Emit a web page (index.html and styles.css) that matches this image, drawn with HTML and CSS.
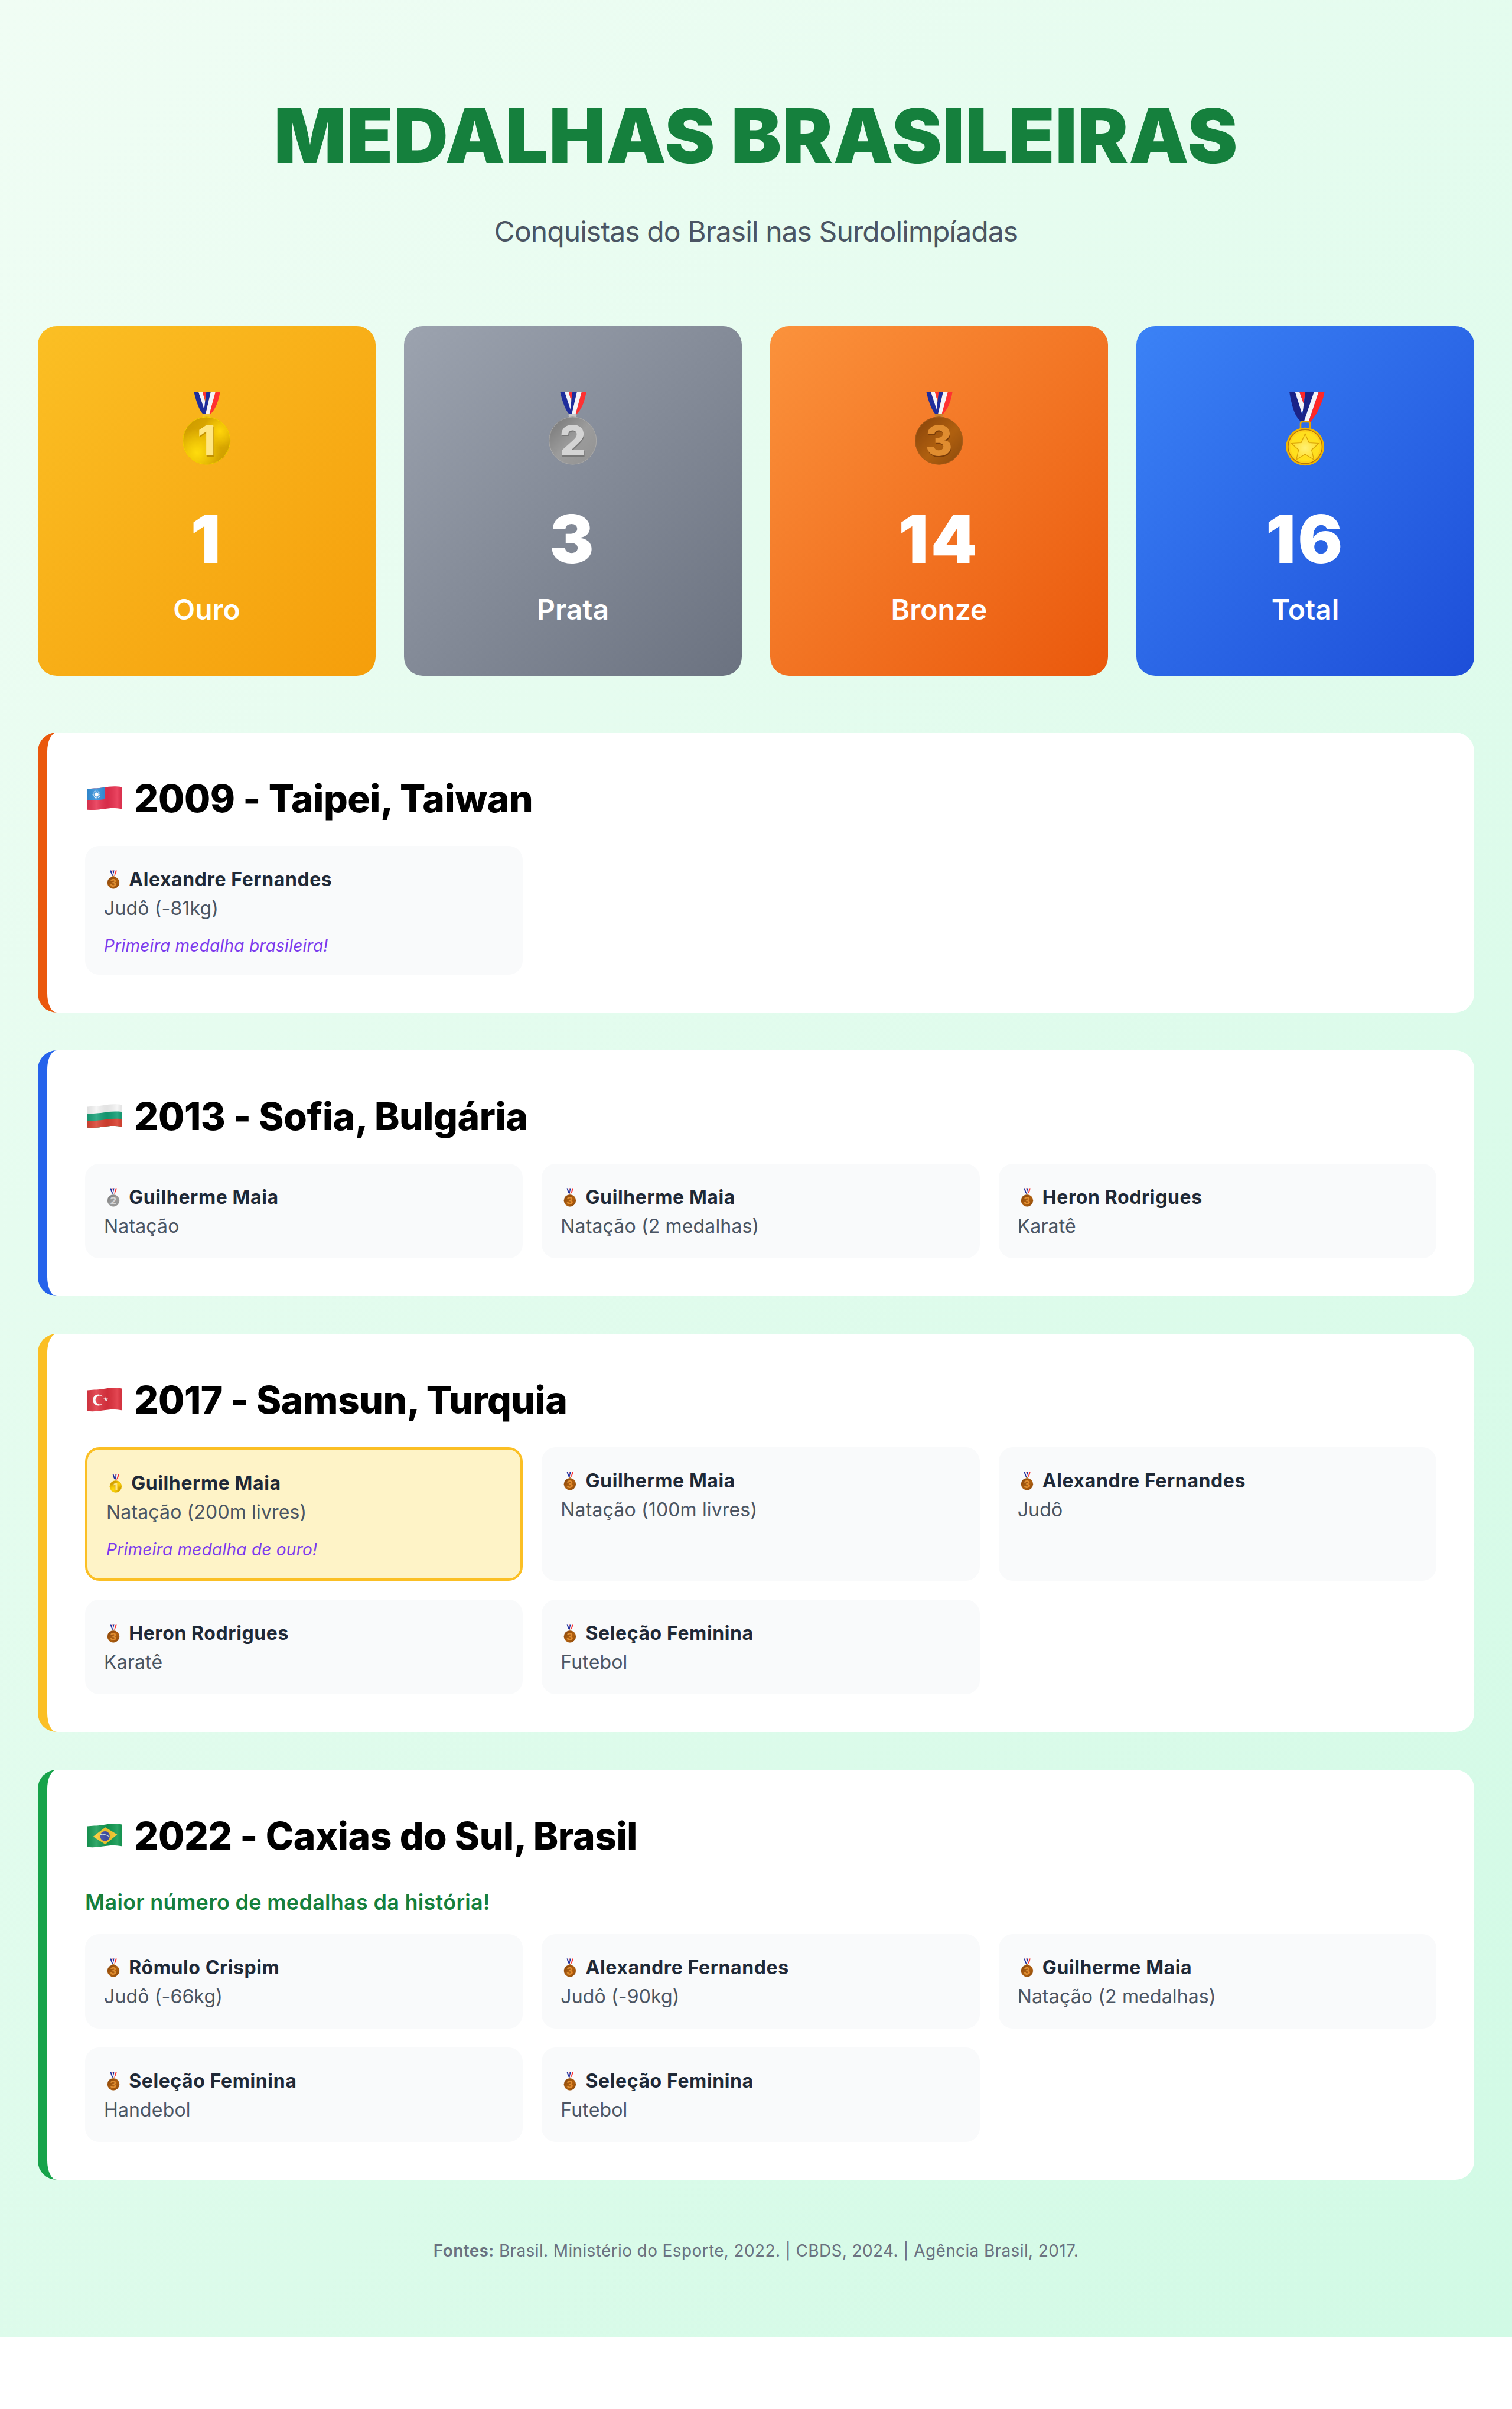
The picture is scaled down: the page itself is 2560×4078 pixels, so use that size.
FILE: index.html
```html
<!DOCTYPE html>
<html lang="pt-BR">
<head>
<meta charset="utf-8">
<title>Medalhas Brasileiras</title>
<link rel="stylesheet" href="styles.css">
</head>
<body>
<svg class="defs" width="0" height="0" aria-hidden="true">
  <defs>
    <linearGradient id="g-gold" x1="0" y1="0" x2="1" y2="1"><stop offset="0" stop-color="#c79500"/><stop offset=".5" stop-color="#e2ae00"/><stop offset="1" stop-color="#c99a00"/></linearGradient>
    <radialGradient id="g-gold-h" cx=".3" cy=".75" r=".5"><stop offset="0" stop-color="#ffdc0c"/><stop offset="1" stop-color="#ffdc0c" stop-opacity="0"/></radialGradient>
    <radialGradient id="g-gold-h2" cx=".78" cy=".3" r=".35"><stop offset="0" stop-color="#ffd50a"/><stop offset="1" stop-color="#ffd50a" stop-opacity="0"/></radialGradient>
    <linearGradient id="g-silver" x1="0" y1="0" x2="1" y2="1"><stop offset="0" stop-color="#757575"/><stop offset=".5" stop-color="#9c9c9c"/><stop offset="1" stop-color="#929292"/></linearGradient>
    <linearGradient id="g-bronze" x1="0" y1="0" x2="1" y2="1"><stop offset="0" stop-color="#84410a"/><stop offset=".55" stop-color="#b0600f"/><stop offset="1" stop-color="#8a480c"/></linearGradient>
    <radialGradient id="g-star" cx=".5" cy=".55" r=".6"><stop offset="0" stop-color="#fff176"/><stop offset="1" stop-color="#ffd814"/></radialGradient>
    <linearGradient id="g-shade" x1="0" y1="0" x2="1" y2="0"><stop offset="0" stop-color="#000" stop-opacity=".1"/><stop offset=".3" stop-color="#fff" stop-opacity=".14"/><stop offset=".6" stop-color="#000" stop-opacity=".07"/><stop offset=".85" stop-color="#fff" stop-opacity=".1"/><stop offset="1" stop-color="#000" stop-opacity=".08"/></linearGradient>
    <clipPath id="flag-clip"><path d="M4 15.5C12 14.5 19 15 30 13.3 42 11.4 51 10.5 62 12.5V49.3C51 47.3 42 47.5 30 49.5 19 51.3 12 51.6 4 50.7Z"/></clipPath>
    <path id="wave" d="M-2 15.5C12 14.5 19 15 30 13.3 42 11.4 51 10.5 68 12.5V80H-2Z"/>

    <g id="ribbon">
      <path fill="#1f2d9c" d="M26.3 2H34L45 34 43 41C36 35 31 22 26.3 2Z"/>
      <path fill="#f4f4f8" d="M34 2H40.7L47 24 44 33Z"/>
      <path fill="#ff3131" d="M40.7 2H47.3L45 17Z"/>
      <path fill="#1f2d9c" d="M47.3 2H55L45.7 42H42.3Z"/>
      <path fill="#f4f4f8" d="M55 2H63L52 42H45.7Z"/>
      <path fill="#ff3131" d="M63 2H70.7C68 18 63 33 52 42Z"/>
    </g>

    <symbol id="m1" viewBox="-16 0 128 128">
      <use href="#ribbon"/>
      <rect x="40.7" y="39" width="13.5" height="6" rx="2" fill="#f2c230"/>
      <circle cx="47.7" cy="85" r="40.5" fill="url(#g-gold)"/>
      <circle cx="47.7" cy="85" r="40.5" fill="url(#g-gold-h)"/>
      <circle cx="47.7" cy="85" r="40.5" fill="url(#g-gold-h2)"/>
      <circle cx="47.7" cy="85" r="40" fill="none" stroke="#f5d000" stroke-width="1"/>
      <text class="medal-digit" x="48.5" y="111.5" fill="#c08f00">1</text>
      <text class="medal-digit" x="47.7" y="110" fill="#ffe681">1</text>
    </symbol>
    <symbol id="m2" viewBox="-16 0 128 128">
      <use href="#ribbon"/>
      <rect x="40.7" y="39" width="13.5" height="6" rx="2" fill="#c8c8c8"/>
      <circle cx="47.7" cy="85" r="40.5" fill="url(#g-silver)"/>
      <circle cx="47.7" cy="85" r="40" fill="none" stroke="#aaaaaa" stroke-width="1"/>
      <text class="medal-digit" x="48.5" y="111.5" fill="#777777">2</text>
      <text class="medal-digit" x="47.7" y="110" fill="#d4d4d4">2</text>
    </symbol>
    <symbol id="m3" viewBox="-16 0 128 128">
      <use href="#ribbon"/>
      <rect x="40.7" y="39" width="13.5" height="6" rx="2" fill="#c9822f"/>
      <circle cx="47.7" cy="85" r="40.5" fill="url(#g-bronze)"/>
      <circle cx="47.7" cy="85" r="40" fill="none" stroke="#a65c1c" stroke-width="1"/>
      <text class="medal-digit" x="48.5" y="111.5" fill="#7a3c08">3</text>
      <text class="medal-digit" x="47.7" y="110" fill="#e08d30">3</text>
    </symbol>
    <symbol id="m-sport" viewBox="-16 0 128 128">
      <path fill="#1a2387" d="M21 2H30.7L42 38 43 52H40C30 44 25 26 21 2Z"/>
      <path fill="#f4f4f8" d="M30.7 2H38L47 28 42 38Z"/>
      <path fill="#ff2626" d="M38 2H48.3L45 22Z"/>
      <path fill="#1a2387" d="M48.3 2H63L46 52H41.5Z"/>
      <path fill="#f4f4f8" d="M63 2H70.7L54 52H46Z"/>
      <path fill="#ff2626" d="M70.7 2H80.7C77 22 67 42 56 54L54 52Z"/>
      <path fill="none" stroke="#e8a400" stroke-width="2.6" d="M40 65V56Q40 53 43 53H53Q56 53 56 56V65"/>
      <circle cx="47.7" cy="95" r="32.3" fill="#f2b600"/>
      <circle cx="47.7" cy="95" r="28.8" fill="#ffd21a" stroke="#b9760c" stroke-width="1.5"/>
      <circle cx="47.7" cy="95" r="25" fill="#ffdf1e"/>
      <path fill="url(#g-star)" stroke="#d9a206" stroke-width="1.2" stroke-linejoin="round" d="M47.7 73L54.3 88.5 71 89.5 58.6 100.5 62.6 117 47.7 108 32.8 117 36.8 100.5 24.4 89.5 41 88.5Z"/>
    </symbol>

    <symbol id="f-tw" viewBox="0 0 64 64">
      <g clip-path="url(#flag-clip)">
        <rect width="64" height="64" fill="#e8304f"/>
        <path fill="#2f8fdc" d="M0 0H34V32.7C24 34.5 14 34.5 0 34Z"/>
        <circle cx="19.3" cy="25" r="3.6" fill="#fff"/>
        <circle cx="19.3" cy="25" r="5.6" fill="none" stroke="#fff" stroke-width="2" stroke-dasharray="1.2 1.2"/>
        <rect width="64" height="64" fill="url(#g-shade)"/>
      </g>
    </symbol>
    <symbol id="f-bg" viewBox="0 0 64 64">
      <g clip-path="url(#flag-clip)">
        <rect width="64" height="64" fill="#f4f4f4"/>
        <use href="#wave" y="12.2" fill="#149f76"/>
        <use href="#wave" y="24.4" fill="#d9402f"/>
        <rect width="64" height="64" fill="url(#g-shade)"/>
      </g>
    </symbol>
    <symbol id="f-tr" viewBox="0 0 64 64">
      <g clip-path="url(#flag-clip)">
        <rect width="64" height="64" fill="#e0323f"/>
        <circle cx="22.5" cy="32" r="9.5" fill="#fff"/>
        <circle cx="25.2" cy="32" r="7.6" fill="#e0323f"/>
        <path fill="#fff" d="M35 26.5L36 29.4 39 29.4 36.6 31.2 37.5 34.1 35 32.3 32.5 34.1 33.4 31.2 31 29.4 34 29.4Z"/>
        <rect width="64" height="64" fill="url(#g-shade)"/>
      </g>
    </symbol>
    <symbol id="f-br" viewBox="0 0 64 64">
      <g clip-path="url(#flag-clip)">
        <rect width="64" height="64" fill="#129a52"/>
        <path fill="#f8c92c" d="M34.3 17.3L54.3 29.5 34.3 46.3 13.7 33Z"/>
        <circle cx="33.7" cy="32.3" r="8.3" fill="#4250ac"/>
        <path fill="none" stroke="#cfe6e0" stroke-width="1.4" d="M25.8 29.5C31 28.5 37 30.3 41.5 33.5"/>
        <rect width="64" height="64" fill="url(#g-shade)"/>
      </g>
    </symbol>
  </defs>
</svg>

<div class="page">
  <header class="header">
    <h1 class="title">MEDALHAS BRASILEIRAS</h1>
    <p class="subtitle">Conquistas do Brasil nas Surdolimpíadas</p>
  </header>

  <section class="stats">
    <div class="stat stat-gold">
      <svg class="stat-icon"><use href="#m1"/></svg>
      <div class="stat-num">1</div>
      <div class="stat-label">Ouro</div>
    </div>
    <div class="stat stat-silver">
      <svg class="stat-icon"><use href="#m2"/></svg>
      <div class="stat-num">3</div>
      <div class="stat-label">Prata</div>
    </div>
    <div class="stat stat-bronze">
      <svg class="stat-icon"><use href="#m3"/></svg>
      <div class="stat-num">14</div>
      <div class="stat-label">Bronze</div>
    </div>
    <div class="stat stat-total">
      <svg class="stat-icon"><use href="#m-sport"/></svg>
      <div class="stat-num">16</div>
      <div class="stat-label">Total</div>
    </div>
  </section>

  <section class="year year-2009">
    <h2 class="year-title"><svg class="flag"><use href="#f-tw"/></svg> 2009 - Taipei, Taiwan</h2>
    <div class="items">
      <div class="item item-noted">
        <div class="name"><svg class="medal"><use href="#m3"/></svg> Alexandre Fernandes</div>
        <div class="desc">Judô (-81kg)</div>
        <div class="note">Primeira medalha brasileira!</div>
      </div>
    </div>
  </section>

  <section class="year year-2013">
    <h2 class="year-title"><svg class="flag"><use href="#f-bg"/></svg> 2013 - Sofia, Bulgária</h2>
    <div class="items">
      <div class="item">
        <div class="name"><svg class="medal"><use href="#m2"/></svg> Guilherme Maia</div>
        <div class="desc">Natação</div>
      </div>
      <div class="item">
        <div class="name"><svg class="medal"><use href="#m3"/></svg> Guilherme Maia</div>
        <div class="desc">Natação (2 medalhas)</div>
      </div>
      <div class="item">
        <div class="name"><svg class="medal"><use href="#m3"/></svg> Heron Rodrigues</div>
        <div class="desc">Karatê</div>
      </div>
    </div>
  </section>

  <section class="year year-2017">
    <h2 class="year-title"><svg class="flag"><use href="#f-tr"/></svg> 2017 - Samsun, Turquia</h2>
    <div class="items">
      <div class="item item-noted item-gold">
        <div class="name"><svg class="medal"><use href="#m1"/></svg> Guilherme Maia</div>
        <div class="desc">Natação (200m livres)</div>
        <div class="note">Primeira medalha de ouro!</div>
      </div>
      <div class="item">
        <div class="name"><svg class="medal"><use href="#m3"/></svg> Guilherme Maia</div>
        <div class="desc">Natação (100m livres)</div>
      </div>
      <div class="item">
        <div class="name"><svg class="medal"><use href="#m3"/></svg> Alexandre Fernandes</div>
        <div class="desc">Judô</div>
      </div>
      <div class="item">
        <div class="name"><svg class="medal"><use href="#m3"/></svg> Heron Rodrigues</div>
        <div class="desc">Karatê</div>
      </div>
      <div class="item">
        <div class="name"><svg class="medal"><use href="#m3"/></svg> Seleção Feminina</div>
        <div class="desc">Futebol</div>
      </div>
    </div>
  </section>

  <section class="year year-2022">
    <h2 class="year-title"><svg class="flag"><use href="#f-br"/></svg> 2022 - Caxias do Sul, Brasil</h2>
    <p class="highlight">Maior número de medalhas da história!</p>
    <div class="items">
      <div class="item">
        <div class="name"><svg class="medal"><use href="#m3"/></svg> Rômulo Crispim</div>
        <div class="desc">Judô (-66kg)</div>
      </div>
      <div class="item">
        <div class="name"><svg class="medal"><use href="#m3"/></svg> Alexandre Fernandes</div>
        <div class="desc">Judô (-90kg)</div>
      </div>
      <div class="item">
        <div class="name"><svg class="medal"><use href="#m3"/></svg> Guilherme Maia</div>
        <div class="desc">Natação (2 medalhas)</div>
      </div>
      <div class="item">
        <div class="name"><svg class="medal"><use href="#m3"/></svg> Seleção Feminina</div>
        <div class="desc">Handebol</div>
      </div>
      <div class="item">
        <div class="name"><svg class="medal"><use href="#m3"/></svg> Seleção Feminina</div>
        <div class="desc">Futebol</div>
      </div>
    </div>
  </section>

  <footer class="footer"><strong>Fontes:</strong> Brasil. Ministério do Esporte, 2022. | CBDS, 2024. | Agência Brasil, 2017.</footer>
</div>
</body>
</html>
```

FILE: styles.css
```css
* { box-sizing: border-box; }
html, body { margin: 0; padding: 0; background: #fff; }
body { font-family: Inter, "Noto Sans", sans-serif; line-height: 1.5; }
.defs { position: absolute; }
.medal-digit { font-family: Inter, sans-serif; font-size: 70px; font-weight: 800; text-anchor: middle; }

.page {
  height: 3956px;
  padding: 64px;
  background: linear-gradient(135deg, #f0fdf4 0%, #d1fae5 100%);
}

.header { padding-top: 70px; margin-bottom: 124px; text-align: center; }
.title { margin: 0 0 30px; font-size: 128px; line-height: 192px; font-weight: 900; letter-spacing: .9px; color: #15803d; }
.subtitle { margin: 0; font-size: 48px; line-height: 72px; letter-spacing: -.93px; color: #4b5563; }

.stats { display: grid; grid-template-columns: repeat(4, 1fr); gap: 48px; margin-bottom: 96px; }
.stat {
  display: flex; flex-direction: column; align-items: center;
  height: 592px; padding-top: 109px;
  border-radius: 32px; color: #fff;
}
.stat-gold { background: linear-gradient(135deg, #fbbf24, #f59e0b); }
.stat-silver { background: linear-gradient(135deg, #9ca3af, #6b7280); }
.stat-bronze { background: linear-gradient(135deg, #fb923c, #ea580c); }
.stat-total { background: linear-gradient(135deg, #3b82f6, #1d4ed8); }
.stat-icon { display: block; width: 128px; height: 128px; margin-bottom: 39px; }
.stat-num { font-size: 112px; line-height: 168px; font-weight: 900; letter-spacing: 4px; }
.stat-label { font-size: 48px; line-height: 72px; font-weight: 600; }

.year {
  margin-bottom: 64px; padding: 64px;
  background: #fff; border-left: 16px solid; border-radius: 32px;
}
.year-2009 { border-left-color: #ea580c; }
.year-2013 { border-left-color: #2563eb; }
.year-2017 { border-left-color: #fbbf24; }
.year-2022 { border-left-color: #16a34a; }
.year-title { margin: 0 0 32px; font-size: 64px; line-height: 96px; font-weight: 800; letter-spacing: -.4px; color: #000; }
.flag { width: 64px; height: 64px; margin-right: 6px; vertical-align: -9px; }
.highlight { margin: 0 0 27px; padding-top: 5px; font-size: 36px; line-height: 54px; font-weight: 600; letter-spacing: .28px; color: #15803d; }

.items { display: grid; grid-template-columns: repeat(3, 1fr); gap: 32px; }
.item { padding: 31px 32px 30px; background: #f9fafb; border-radius: 24px; }
.item-noted { padding-bottom: 28px; }
.item-gold { background: #fef3c7; border: 4px solid #fbbf24; }
.name { font-size: 32px; line-height: 51px; font-weight: 700; letter-spacing: .6px; color: #1f2937; }
.medal { width: 32px; height: 32px; margin-right: 2px; vertical-align: -5px; }
.desc { font-size: 32px; line-height: 48px; letter-spacing: .15px; color: #4b5563; }
.note { margin-top: 18px; font-size: 28px; line-height: 42px; font-style: italic; letter-spacing: .25px; color: #7c3aed; }

.footer { margin-top: 99px; text-align: center; font-size: 28px; line-height: 42px; letter-spacing: .37px; color: #6b7280; }
.footer strong { font-weight: 600; }
```
